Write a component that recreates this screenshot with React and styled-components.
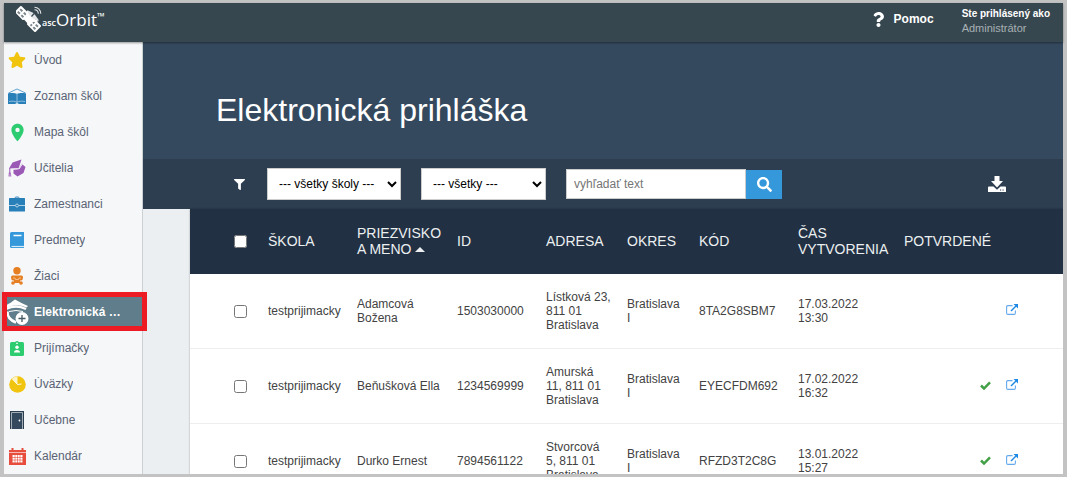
import React, { useState } from 'react'
import styled, { createGlobalStyle } from 'styled-components'
import { FaFilter, FaQuestion, FaSearch, FaStar } from 'react-icons/fa'
import { MdLocationOn } from 'react-icons/md'

const menu = [
    { name: 'Úvod', icon: <FaStar size={18} color='#f1c40f'/> },
    { name: 'Zoznam škôl', icon: <SchoolIcon/> },
    { name: 'Mapa škôl', icon: <MdLocationOn size={21} color='#2ecc71'/> },
    { name: 'Učitelia', icon: <TeacherIcon/> },
    { name: 'Zamestnanci', icon: <BriefcaseIcon/> },
    { name: 'Predmety', icon: <BookIcon/> },
    { name: 'Žiaci', icon: <PupilIcon/> },
    { name: 'Elektronická prihláška', icon: <ApplicationIcon/> },
    { name: 'Prijímačky', icon: <BadgeIcon/> },
    { name: 'Úväzky', icon: <PieIcon/> },
    { name: 'Učebne', icon: <DoorIcon/> },
    { name: 'Kalendár', icon: <CalendarIcon/> },
]

const columns = [78, 89, 100, 89, 81, 72, 99, 106, 102, 57]

const applications = [
    {
        school: 'testprijimacky', name: 'Adamcová Božena', id: '1503030000',
        address: 'Lístková 23, 811 01 Bratislava', district: 'Bratislava I',
        code: '8TA2G8SBM7', created: '17.03.2022 13:30', confirmed: false,
    },
    {
        school: 'testprijimacky', name: 'Beňušková Ella', id: '1234569999',
        address: 'Amurská 11, 811 01 Bratislava', district: 'Bratislava I',
        code: 'EYECFDM692', created: '17.02.2022 16:32', confirmed: true,
    },
    {
        school: 'testprijimacky', name: 'Durko Ernest', id: '7894561122',
        address: 'Stvorcová 5, 811 01 Bratislava', district: 'Bratislava I',
        code: 'RFZD3T2C8G', created: '13.01.2022 15:27', confirmed: true,
    },
]

export default function App() {
    const [active, setActive] = useState('Elektronická prihláška')
    const [selected, setSelected] = useState([])
    const [text, setText] = useState('')

    const toggle = (id) => {
        setSelected(selected.includes(id) ? selected.filter(s => s !== id) : [...selected, id])
    }

    const toggleAll = (e) => {
        setSelected(e.target.checked ? applications.map(a => a.id) : [])
    }

    return (
        <Frame>
            <GlobalStyle/>
            <Header>
                <Logo href='#'>
                    <SatelliteIcon/>
                    <LogoSmall>asc</LogoSmall>
                    <LogoName>Orbit</LogoName>
                    <LogoMark>™</LogoMark>
                </Logo>
                <HeaderRight>
                    <Help href='#'><FaQuestion size={15}/>Pomoc</Help>
                    <User>
                        <UserLabel>Ste prihlásený ako</UserLabel>
                        <UserName>Administrátor</UserName>
                    </User>
                </HeaderRight>
            </Header>
            <Body>
                <Sidebar>
                    {menu.map(item => (
                        <MenuItem
                            key={item.name}
                            href='#'
                            $active={item.name === active}
                            onClick={() => setActive(item.name)}
                        >
                            <MenuIcon>{item.icon}</MenuIcon>
                            <MenuName>{item.name}</MenuName>
                        </MenuItem>
                    ))}
                </Sidebar>
                <Main>
                    <Hero>
                        <Title>Elektronická prihláška</Title>
                    </Hero>
                    <FilterBar>
                        <FilterMark><FaFilter size={11}/></FilterMark>
                        <Select $width='134px' aria-label='Škola'>
                            <option>--- všetky školy ---</option>
                        </Select>
                        <Select $width='125px' aria-label='Stav'>
                            <option>--- všetky ---</option>
                        </Select>
                        <Search>
                            <SearchInput
                                type='text'
                                aria-label='vyhľadať text'
                                placeholder='vyhľadať text'
                                value={text}
                                onChange={e => setText(e.target.value)}
                            />
                            <SearchButton aria-label='Hľadať'><FaSearch size={15}/></SearchButton>
                        </Search>
                        <DownloadButton aria-label='Stiahnuť'><DownloadIcon/></DownloadButton>
                    </FilterBar>
                    <Card>
                        <Table>
                            <colgroup>
                                {columns.map((width, i) => <col key={i} style={{width}}/>)}
                            </colgroup>
                            <thead>
                                <tr>
                                    <CheckHead>
                                        <Check
                                            type='checkbox'
                                            aria-label='Označiť všetky'
                                            checked={selected.length === applications.length}
                                            onChange={toggleAll}
                                        />
                                    </CheckHead>
                                    <Th>ŠKOLA</Th>
                                    <Th>PRIEZVISKO A MENO <SortArrow/></Th>
                                    <Th>ID</Th>
                                    <Th>ADRESA</Th>
                                    <Th>OKRES</Th>
                                    <Th>KÓD</Th>
                                    <Th>ČAS VYTVORENIA</Th>
                                    <Th>POTVRDENÉ</Th>
                                    <Th/>
                                </tr>
                            </thead>
                            <tbody>
                                {applications.map(a => (
                                    <tr key={a.id}>
                                        <CheckCell>
                                            <Check
                                                type='checkbox'
                                                aria-label={a.name}
                                                checked={selected.includes(a.id)}
                                                onChange={() => toggle(a.id)}
                                            />
                                        </CheckCell>
                                        <Td>{a.school}</Td>
                                        <Td>{a.name}</Td>
                                        <Td>{a.id}</Td>
                                        <Td>{a.address}</Td>
                                        <Td>{a.district}</Td>
                                        <Td>{a.code}</Td>
                                        <Td>{a.created}</Td>
                                        <IconCell $right>{a.confirmed && <CheckIcon/>}</IconCell>
                                        <IconCell><OpenLink href='#' aria-label='Otvoriť'><OpenIcon/></OpenLink></IconCell>
                                    </tr>
                                ))}
                            </tbody>
                        </Table>
                    </Card>
                </Main>
            </Body>
        </Frame>
    )
}

function SatelliteIcon() {
    return (
        <svg width='26' height='26' viewBox='0 0 26 26' fill='#fff'>
            <g transform='rotate(45 6 7)'>
                <rect x='0' y='2.500' width='12' height='9' rx='1'/>
                <path d='M2 4.500h3v2H2zM7 4.500h3v2H7zM2 8h3v2H2zM7 8h3v2H7z' fill='#7b878d'/>
            </g>
            <g transform='rotate(45 18 19)'>
                <rect x='12' y='14.500' width='12' height='9' rx='1'/>
                <path d='M14 16.500h3v2h-3zM19 16.500h3v2h-3zM14 20h3v2h-3zM19 20h3v2h-3z' fill='#7b878d'/>
            </g>
            <path d='M7.500 13l4.500-4 6 6-4.500 4.500z'/>
            <path d='M11.500 4Q8.500 9.500 13 13.500T23 15Q19 13.500 15.500 10.200 12.200 7 11.500 4z'/>
            <path d='M12 4.500Q17 6 19.500 9.500T23 14.500Q18 14 14.500 10.500T12 4.500z' fill='#e3e7e9'/>
            <path d='M15.500 10.500l3.500-4' stroke='#37474f' strokeWidth='1.200'/>
            <path d='M18.500 3.700a4 4 0 0 1 3.800 4M18.500 1.200a6.500 6.500 0 0 1 6.300 6.500' fill='none' stroke='#dfe3e5' strokeWidth='1.100'/>
        </svg>
    )
}

function SchoolIcon() {
    return (
        <svg width='18' height='17' viewBox='0 0 18 17'>
            <path d='M.500 5L9 1l8.500 4' fill='none' stroke='#5fa3d0' strokeWidth='1'/>
            <path d='M0 5.500c3-.8 7-.6 9 .5 2-1.100 6-1.300 9-.5V15H0z' fill='#2980b9'/>
            <path d='M9 6v9M1 13.500c3-.6 6-.4 8 .7 2-1.100 5-1.300 8-.7' fill='none' stroke='#a9cde6' strokeWidth='.8'/>
            <path d='M0 15h7l2 1 2-1h7v1H0z' fill='#2980b9'/>
        </svg>
    )
}

function TeacherIcon() {
    return (
        <svg width='18' height='18' viewBox='0 0 18 18' fill='#9b59b6'>
            <path d='M1 9.500L4.500 3.500 13.500.500 10.700 9z'/>
            <path d='M5.500 11l6-1L14.500 5.500 17.500 8l-2 6L9.500 17.500l-4-3z'/>
            <path d='M1.800 9v6' stroke='#9b59b6' strokeWidth='1'/>
            <path d='M.8 13.500h2l.5 4h-3z' opacity='.7'/>
            <path d='M5.500 10.600l5.700-1L14 4.500' fill='none' stroke='#d7bde2' strokeWidth='.7'/>
        </svg>
    )
}

function BriefcaseIcon() {
    return (
        <svg width='16' height='16' viewBox='0 0 16 16'>
            <path d='M5.500 2.500c0-2 5-2 5 0' fill='none' stroke='#2980b9' strokeWidth='1'/>
            <rect y='2' width='16' height='13.500' rx='.5' fill='#2980b9'/>
            <path d='M0 9.500h6M10 9.500h6' stroke='#d4e6f1' strokeWidth='.8'/>
            <circle cx='8' cy='9.500' r='1.500' fill='none' stroke='#d4e6f1' strokeWidth='.8'/>
        </svg>
    )
}

function BookIcon() {
    return (
        <svg width='14' height='17' viewBox='0 0 14 17'>
            <path d='M1.500 0H14v16H1.500Q0 16 0 14.500v-13Q0 0 1.500 0z' fill='#3498db'/>
            <path d='M3.500 3.500h8' stroke='#fff' strokeWidth='1.500'/>
            <path d='M1.500 14.500H14' stroke='#d6eaf8' strokeWidth='1.200'/>
        </svg>
    )
}

function PupilIcon() {
    return (
        <svg width='12' height='18' viewBox='0 0 12 18' fill='#e67e22'>
            <circle cx='6' cy='3.800' r='3.700'/>
            <path d='M1.500 8.500h9Q12 8.500 12 10.500q0 2.500-2 3H2Q0 13 0 10.500q0-2 1.500-2z'/>
            <path d='M2 11h2l.5 1.500h3L8 11h2' fill='none' stroke='#f8d7b8' strokeWidth='.7'/>
            <circle cx='2' cy='16' r='1.800'/>
            <circle cx='10' cy='16' r='1.800'/>
            <path d='M3 13h6v3H3z'/>
        </svg>
    )
}

function ApplicationIcon() {
    return (
        <svg width='24' height='28' viewBox='0 0 24 28'>
            <path d='M0 8Q7 4 10 1.500 16 5 23 8l-1.500 1.500Q10 5 2 10z' fill='#fff'/>
            <path d='M1 11Q11 6 21 11' fill='none' stroke='#fff' strokeWidth='2.500'/>
            <path d='M2.500 13.500Q2 21 11 24.500' fill='none' stroke='#fff' strokeWidth='2.500'/>
            <path d='M4 13.500q7-2 14 0' fill='none' stroke='#fff' strokeWidth='1'/>
            <circle cx='17' cy='20.500' r='6.500' fill='#fff'/>
            <path d='M17 17v7M13.500 20.500h7' stroke='#455a64' strokeWidth='1.300'/>
        </svg>
    )
}

function BadgeIcon() {
    return (
        <svg width='14' height='15' viewBox='0 0 14 15'>
            <rect y='1' width='14' height='14' rx='1.500' fill='#2ecc71'/>
            <path d='M5 2a2 2 0 0 1 4 0z' fill='#2ecc71'/>
            <path d='M6 1.700h2v1H6z' fill='#fff'/>
            <circle cx='7' cy='6.300' r='1.700' fill='#fff'/>
            <path d='M4 11.500q0-2.500 3-2.500t3 2.500z' fill='#fff'/>
        </svg>
    )
}

function PieIcon() {
    return (
        <svg width='17' height='17' viewBox='0 0 17 17'>
            <circle cx='8.500' cy='8.500' r='8.300' fill='#f1c40f'/>
            <path d='M8.500 8.500V.5A8 8 0 0 0 3 2.700z' fill='#fdf3c4'/>
            <path d='M3.500 3l5 5.500 4-.5' fill='none' stroke='#fff' strokeWidth='.9'/>
        </svg>
    )
}

function DoorIcon() {
    return (
        <svg width='14' height='18' viewBox='0 0 14 18'>
            <rect width='14' height='18' fill='#2c3e50'/>
            <path d='M1.500 18V1.500h11V18' fill='#34495e' stroke='#d5dbe0' strokeWidth='.7'/>
            <circle cx='9.500' cy='9.500' r='.9' fill='#fff'/>
        </svg>
    )
}

function CalendarIcon() {
    return (
        <svg width='17' height='17' viewBox='0 0 17 17'>
            <path d='M0 2h17v15H0z' fill='#e74c3c'/>
            <path d='M3.500 0v3M13.500 0v3' stroke='#e74c3c' strokeWidth='2'/>
            <path d='M0 4.500h17' stroke='#f5b7b1' strokeWidth='1'/>
            <path d='M3.500 7h10v7.500h-10z' fill='#fff'/>
            <path d='M3 9.500h11M3 12h11M6 7v8M8.500 7v8M11 7v8' stroke='#e74c3c' strokeWidth='.6'/>
        </svg>
    )
}

function DownloadIcon() {
    return (
        <svg width='18' height='16' viewBox='0 0 18 16' fill='#fff'>
            <path d='M6.500 0h5v5H15l-6 6.500L3 5h3.500z'/>
            <path d='M1 10.500h4.500L9 13.800l3.500-3.300H17q1 0 1 1V16H0v-4.500q0-1 1-1z'/>
            <path d='M12 14h1.200M14.500 14h1.200' stroke='#2c3e50' strokeWidth='1'/>
        </svg>
    )
}

function CheckIcon() {
    return (
        <svg width='11' height='9' viewBox='0 0 11 9'>
            <path d='M1 4.500l3 3L10 1.300' fill='none' stroke='#43a047' strokeWidth='2.500'/>
        </svg>
    )
}

function OpenIcon() {
    return (
        <svg width='12' height='12' viewBox='0 0 12 12'>
            <path d='M6.500 1.600H2Q.6 1.600 .6 3V9Q.6 10.400 2 10.400h6Q9.400 10.400 9.400 9V6.500' fill='none' stroke='#64a9ee' strokeWidth='1.100'/>
            <path d='M5 7L10 2' stroke='#1e88e5' strokeWidth='1.500'/>
            <path d='M7.500 0H12v4.500z' fill='#1e88e5'/>
        </svg>
    )
}

const GlobalStyle = createGlobalStyle`
    * {
        box-sizing: border-box;
    }

    body {
        margin: 0;
        font-family: 'Liberation Sans', Arial, sans-serif;
        font-size: 12px;
        color: #424242;
    }

    a {
        text-decoration: none;
    }
`;

const Frame = styled.div`
    display: flex;
    flex-direction: column;
    height: 100vh;
    padding: 3px 4px;
    background: #c3c3c3;
    overflow: hidden;
`;

const Header = styled.header`
    display: flex;
    justify-content: space-between;
    flex: none;
    height: 39px;
    padding: 0 13px 0 12px;
    background: #37474f;
    box-shadow: 0 1px 2px rgba(0, 0, 0, .4);
    z-index: 1;
`;

const Logo = styled.a`
    display: flex;
    align-items: flex-start;
    padding-top: 3px;
    color: #fff;
    font-family: 'Open Sans', sans-serif;
`;

const LogoSmall = styled.span`
    padding-top: 11px;
    font-size: 9px;
    font-weight: 600;
    line-height: 12px;
`;

const LogoName = styled.span`
    padding-top: 3px;
    font-size: 17px;
    font-weight: 500;
    line-height: 22px;
`;

const LogoMark = styled.span`
    padding-top: 4px;
    font-size: 10px;
    line-height: 12px;
`;

const HeaderRight = styled.div`
    display: flex;
    gap: 28px;
`;

const Help = styled.a`
    display: flex;
    align-items: center;
    gap: 8px;
    height: 32px;
    color: #fff;
    font-weight: bold;
`;

const User = styled.div`
    padding-top: 4px;
`;

const UserLabel = styled.div`
    color: #fff;
    font-size: 10px;
    font-weight: bold;
    line-height: 14px;
`;

const UserName = styled.div`
    color: #a8b1b5;
    font-size: 11px;
    line-height: 14px;
`;

const Body = styled.div`
    display: flex;
    flex: 1;
    min-height: 0;
`;

const Sidebar = styled.nav`
    flex: none;
    width: 139px;
    background: #f5f7f9;
    border-right: 1px solid #ccd0d3;
`;

const MenuItem = styled.a`
    position: relative;
    display: flex;
    align-items: center;
    height: 36px;
    gap: 4px;
    padding-right: 16px;
    color: ${props => props.$active ? '#fff' : '#5a6374'};
    font-weight: ${props => props.$active ? 'bold' : 'normal'};
    background: ${props => props.$active ? '#607d8b' : 'none'};

    &::after {
        content: '';
        display: ${props => props.$active ? 'block' : 'none'};
        position: absolute;
        inset: -2px -5px -1px -2px;
        border: 5px solid #ed1c24;
        z-index: 2;
    }
`;

const MenuIcon = styled.span`
    display: flex;
    justify-content: center;
    flex: none;
    width: 26px;
`;

const MenuName = styled.span`
    overflow: hidden;
    text-overflow: ellipsis;
    white-space: nowrap;
`;

const Main = styled.main`
    flex: 1;
    min-width: 0;
    background: #ebeff2;
    overflow: hidden;
`;

const Hero = styled.div`
    display: flex;
    align-items: center;
    height: 117px;
    padding: 20px 73px 0;
    background: #34495e;
`;

const Title = styled.h1`
    margin: 0;
    color: #fff;
    font-size: 32px;
    font-weight: normal;
`;

const FilterBar = styled.div`
    display: flex;
    align-items: center;
    gap: 20px;
    height: 50px;
    padding: 0 57px 0 91px;
    background: #2c3e50;
`;

const FilterMark = styled.span`
    display: flex;
    width: 13px;
    color: #fff;
`;

const Select = styled.select`
    width: ${props => props.$width};
    height: 32px;
    padding-left: 7px;
    border: 1px solid #ccc;
    border-radius: 0;
    background: #fff;
    color: #000;
    font-family: inherit;
    font-size: 12px;
`;

const Search = styled.div`
    display: flex;
    align-items: flex-end;
`;

const SearchInput = styled.input`
    width: 180px;
    height: 30px;
    padding: 0 7px;
    border: 1px solid #ccc;
    background: #fff;
    color: #000;
    font-family: inherit;
    font-size: 12px;
`;

const SearchButton = styled.button`
    display: flex;
    align-items: center;
    justify-content: center;
    width: 36px;
    height: 29px;
    padding: 0;
    border: none;
    background: #3498db;
    color: #fff;
`;

const DownloadButton = styled.button`
    display: flex;
    margin-left: auto;
    padding: 0;
    border: none;
    background: none;
`;

const Card = styled.div`
    margin-left: 47px;
    background: #fff;
    box-shadow: 0 0 2px rgba(0, 0, 0, .3);
`;

const Table = styled.table`
    width: 100%;
    table-layout: fixed;
    border-spacing: 0;
`;

const Th = styled.th`
    height: 65px;
    padding: 0 15px 2px 0;
    background: #213042;
    color: #eceff1;
    font-size: 14px;
    font-weight: normal;
    line-height: 16px;
    text-align: left;
`;

const CheckHead = styled(Th)`
    padding: 0 0 0 44px;
`;

const Td = styled.td`
    height: 75px;
    padding: 0 15px 1px 0;
    border-bottom: 1px solid #eee;
    line-height: 14px;
    text-align: ${props => props.$right ? 'right' : 'left'};
`;

const CheckCell = styled(Td)`
    padding: 0 0 0 44px;
`;

const IconCell = styled(Td)`
    padding-bottom: 3px;

    svg {
        vertical-align: middle;
    }
`;

const Check = styled.input`
    display: block;
    width: 13px;
    height: 13px;
    margin: 0;
`;

const SortArrow = styled.span`
    display: inline-block;
    border: 5px solid transparent;
    border-top: none;
    border-bottom: 5px solid #eceff1;
    vertical-align: middle;
`;

const OpenLink = styled.a`
    display: flex;
`;
